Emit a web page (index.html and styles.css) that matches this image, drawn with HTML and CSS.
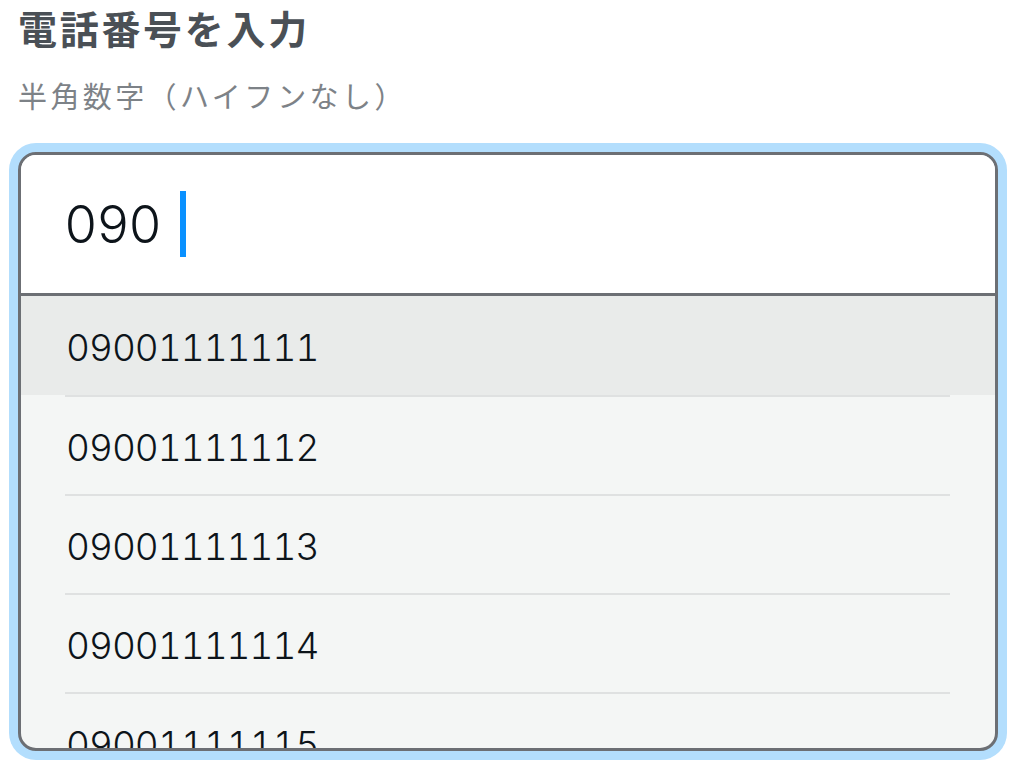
FILE: index.html
```html
<!DOCTYPE html>
<html>

<head>
    <title>電話番号を入力</title>
    <meta http-equiv="Content-Type" content="text/html; charset=UTF-8">
    <meta name="viewport" content="width=device-width, initial-scale=1.0">
    <link rel="stylesheet" href="styles.css">
</head>

<body>
    <div class='content'>
        <h1 class='title'>電話番号を入力</h1>
        <p class='note'>半角数字（ハイフンなし）</p>
        <div class='tel-box'>
            <div class='tel-input'>
                <span class='tel-value'>090</span><span class='caret'></span>
            </div>
            <ul class='suggest'>
                <li class='active'><div class='row'>09001111111</div></li>
                <li><div class='row'>09001111112</div></li>
                <li><div class='row'>09001111113</div></li>
                <li><div class='row'>09001111114</div></li>
                <li><div class='row'>09001111115</div></li>
            </ul>
        </div>
    </div>
</body>

</html>
```

FILE: styles.css
```css
html,
body
{
    margin: 0;
    width: 100%;
    height: 100%;
    font-family: "Noto Sans CJK JP", "Noto Sans", sans-serif;
}

body
{
    background-color: #fff;
    overflow: hidden;
}

.content
{
    padding: 0 17px 0 18px;
}

.title
{
    margin: 0;
    height: 54px;
    line-height: 54px;
    font-size: 39px;
    font-weight: 700;
    letter-spacing: 2.7px;
    color: #4a5056;
}

.note
{
    margin: 21px 0 0 0;
    height: 40px;
    line-height: 40px;
    font-size: 29px;
    letter-spacing: 3.4px;
    color: #7d8287;
}

.tel-box
{
    margin-top: 37px;
    height: 599px;
    box-sizing: border-box;
    border: 3px solid #6c6f74;
    border-radius: 18px;
    box-shadow: 0 0 0 9px #b3defd;
    overflow: hidden;
    display: flex;
    flex-direction: column;
    background-color: #f4f6f5;
}

.tel-input
{
    flex: none;
    height: 138px;
    background-color: #fff;
    border-bottom: 3px solid #6c6f74;
    display: flex;
    align-items: center;
    padding-left: 43px;
}

.tel-value,
.suggest .row
{
    font-family: Inter, "Noto Sans CJK JP", sans-serif;
    font-weight: 300;
    font-variant-numeric: tabular-nums;
    color: #0d141a;
}

.tel-value
{
    font-size: 52px;
    letter-spacing: -1.5px;
}

.caret
{
    width: 6px;
    height: 66px;
    margin-left: 20px;
    background-color: #0a91ff;
}

.suggest
{
    list-style: none;
    margin: 0;
    padding: 0;
}

.suggest li
{
    height: 99px;
    box-sizing: border-box;
    padding: 0 45px 0 44px;
    display: flex;
}

.suggest li.active
{
    background-color: #e9ebea;
}

.suggest .row
{
    flex: 1;
    display: flex;
    align-items: center;
    padding: 3px 0 0 1px;
    font-size: 37px;
    letter-spacing: -1px;
}

.suggest li + li .row
{
    border-top: 2px solid #dfe1e1;
}
```
